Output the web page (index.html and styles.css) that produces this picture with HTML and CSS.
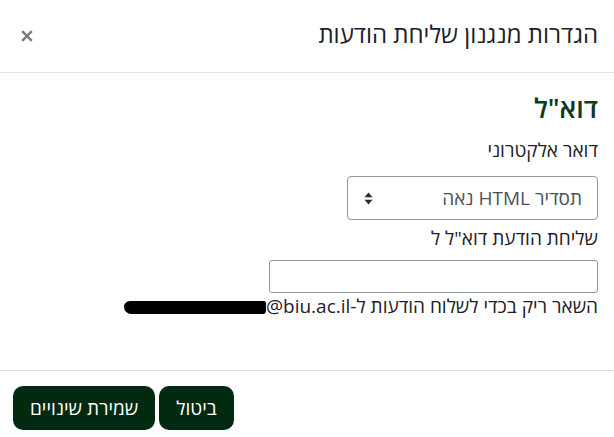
FILE: index.html
```html
<!DOCTYPE html>
<html lang="he" dir="rtl">
<head>
<meta charset="utf-8">
<link rel="stylesheet" href="styles.css">
</head>
<body>
<div class="modal">
  <header class="modal-header">
    <h5 class="modal-title">הגדרות מנגנון שליחת הודעות</h5>
    <button class="close" aria-label="סגירה">
      <svg width="12" height="12" viewBox="0 0 12 12"><path d="M1.2 1.2 L10.8 10.8 M10.8 1.2 L1.2 10.8" stroke="#7b7b7b" stroke-width="2.4"/></svg>
    </button>
  </header>
  <main class="modal-body">
    <h3 class="section-title">דוא"ל</h3>
    <label class="field-label">דואר אלקטרוני</label>
    <div class="select">
      <span class="select-text">תסדיר HTML נאה</span>
      <svg class="select-arrows" width="9" height="13" viewBox="0 0 9 13"><path d="M4.5 0.5 L8.5 5.2 H0.5 Z M4.5 12.5 L8.5 7.8 H0.5 Z" fill="#2b2b2b"/></svg>
    </div>
    <label class="field-label second">שליחת הודעת דוא"ל ל</label>
    <div class="input"></div>
    <p class="help">השאר ריק בכדי לשלוח הודעות ל-<bdi dir="ltr"><span class="redacted">xxxxxxxxxxxxxx</span>@biu.ac.il</bdi></p>
  </main>
  <footer class="modal-footer">
    <button class="btn">ביטול</button>
    <button class="btn">שמירת שינויים</button>
  </footer>
</div>
</body>
</html>
```
FILE: styles.css
```css
* { box-sizing: border-box; }
html, body { margin: 0; padding: 0; background: #fff; }
body {
  font-family: "Open Sans", "DejaVu Sans", sans-serif;
  color: #1d2125;
  font-size: 19px;
}
.modal { width: 614px; height: 437px; display: flex; flex-direction: column; }
.modal-header {
  display: flex;
  align-items: flex-start;
  justify-content: space-between;
  height: 73px;
  padding: 17px 16px 0 21px;
  border-bottom: 1px solid #dee2e6;
}
.modal-title {
  margin: 0;
  font-size: 24px;
  font-weight: 500;
  line-height: 34px;
  color: #1d2125;
}
.close {
  border: 0; background: none; padding: 0; margin: 0;
  width: 12px; height: 34px;
  display: flex; align-items: center; justify-content: center;
  padding-top: 3px;
}
.modal-body {
  flex: 1;
  padding: 17px 16px 0 16px;
  display: flex;
  flex-direction: column;
  align-items: flex-start;
}
.section-title {
  margin: 0 0 10px 0;
  font-size: 27px;
  font-weight: 600;
  color: #0d3b1b;
  line-height: 36px;
}
.field-label { display: block; line-height: 28px; }
.select {
  margin-top: 12px;
  width: 251px; height: 44px;
  border: 1px solid #8f959e;
  border-radius: 4px;
  display: flex;
  align-items: center;
  justify-content: space-between;
  padding: 0 15px 0 16px;
  color: #4d5156;
}
.select-text { font-size: 19px; line-height: 28px; }
.field-label.second { margin-top: 4px; }
.input {
  margin-top: 8px;
  width: 329px; height: 33px;
  border: 1px solid #8f959e;
  border-radius: 3px;
}
.help { margin: 2px 0 0 0; line-height: 22px; font-size: 19px; }
.redacted {
  display: inline-block;
  background: #000;
  color: #000;
  height: 13px;
  width: 142px;
  border-radius: 8px 3px 5px 10px;
  vertical-align: -1px;
  overflow: hidden;
  line-height: 13px;
  font-size: 10px;
}
.modal-footer {
  height: 67px;
  border-top: 1px solid #dee2e6;
  display: flex;
  align-items: flex-start;
  justify-content: flex-end;
  gap: 4px;
  padding: 15px 13px 0 13px;
}
.btn {
  font-family: inherit;
  font-size: 19px;
  font-weight: 500;
  background: #012a11;
  color: #fff;
  border: 0;
  border-radius: 10px;
  height: 44px;
  padding: 0 17px;
  line-height: 44px;
}
```
